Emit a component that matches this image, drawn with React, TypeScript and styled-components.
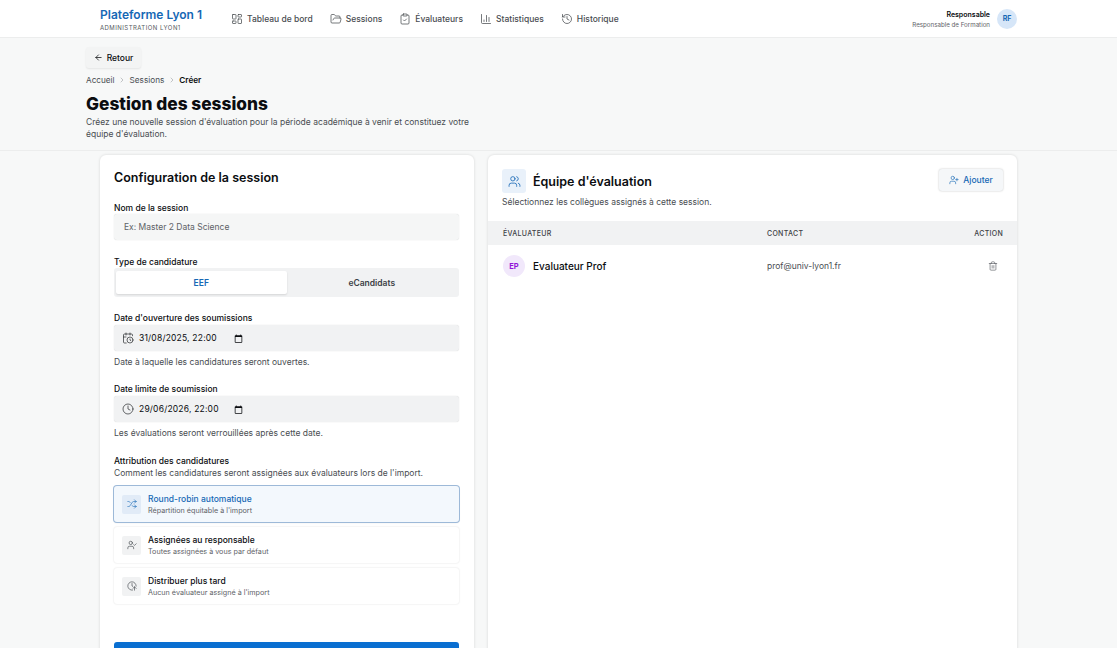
import React from 'react';
import styled, { createGlobalStyle } from 'styled-components';
import {
  ArrowLeft,
  CalendarClock,
  ChartColumn,
  ChevronRight,
  ClipboardCheck,
  Clock,
  ClockArrowUp,
  FolderOpen,
  History,
  LayoutDashboard,
  Shuffle,
  Trash2,
  UserCheck,
  UserPlus,
  Users,
} from 'lucide-react';

const FONT = `'Inter', 'Noto Sans', sans-serif`;

const GlobalStyle = createGlobalStyle`
  html, body {
    margin: 0;
    padding: 0;
    background: #f7f8f8;
    font-family: ${FONT};
    color: #0b0d10;
  }
  * { box-sizing: border-box; }
`;

const Page = styled.div`
  height: 100vh;
  overflow: hidden;
`;

// Top bar
const TopBar = styled.header`
  height: 38px;
  background: #fff;
  border-bottom: 1px solid #eceded;
  padding: 0 100px;
  display: flex;
  align-items: center;
  justify-content: space-between;
`;

const TopLeft = styled.div`
  display: flex;
  align-items: center;
  gap: 26px;
`;

const Brand = styled.div`
  display: flex;
  flex-direction: column;
  gap: 2px;
  width: 105px;
`;

const BrandName = styled.span`
  font-size: 12px;
  font-weight: 600;
  color: #1668b5;
  white-space: nowrap;
`;

const BrandSub = styled.span`
  font-size: 6px;
  letter-spacing: 0.45px;
  color: #55595e;
  text-transform: uppercase;
  white-space: nowrap;
`;

const Nav = styled.nav`
  display: flex;
  align-items: center;
  gap: 17px;
  padding-top: 1px;
`;

const NavItem = styled.a`
  display: flex;
  align-items: center;
  gap: 4px;
  font-size: 8.5px;
  font-weight: 500;
  color: #494d52;
  white-space: nowrap;
`;

const UserArea = styled.div`
  display: flex;
  align-items: center;
  gap: 7px;
`;

const UserText = styled.div`
  display: flex;
  flex-direction: column;
  align-items: flex-end;
  gap: 2px;
`;

const UserRole = styled.span`
  font-size: 7px;
  font-weight: 600;
`;

const UserSub = styled.span`
  font-size: 6.2px;
  color: #5e6267;
`;

const UserBadge = styled.div`
  width: 20px;
  height: 20px;
  border-radius: 50%;
  background: #d6e6f8;
  color: #1668b5;
  font-size: 7px;
  font-weight: 700;
  display: flex;
  align-items: center;
  justify-content: center;
`;

// Page heading
const PageHead = styled.section`
  height: 113px;
  padding: 9px 86px 0;
  border-bottom: 1px solid #eceded;
`;

const BackButton = styled.button`
  height: 21px;
  width: 55px;
  border: 0;
  border-radius: 3px;
  background: #f3f4f4;
  box-shadow: 0 1px 2px rgba(0, 0, 0, 0.08);
  font-family: ${FONT};
  font-size: 8.5px;
  font-weight: 500;
  color: #0b0d10;
  display: flex;
  align-items: center;
  justify-content: center;
  gap: 4px;
  padding: 0;
`;

const Crumbs = styled.div`
  margin-top: 6px;
  height: 11px;
  display: flex;
  align-items: center;
  gap: 3.5px;
  font-size: 8.2px;
  color: #494d52;
  svg { color: #8a8e93; }
`;

const CrumbCurrent = styled.span`
  font-weight: 600;
  color: #0b0d10;
`;

const Title = styled.h1`
  margin: 7px 0 0;
  font-size: 17.3px;
  line-height: 24px;
  font-weight: 800;
  color: #0b0d10;
`;

const Lead = styled.p`
  margin: 0;
  width: 390px;
  font-size: 8.5px;
  line-height: 12px;
  color: #494d52;
`;

// Main columns
const Columns = styled.main`
  display: grid;
  grid-template-columns: 374px 529px;
  gap: 14px;
  padding: 4px 100px 0;
`;

const Card = styled.section`
  background: #fff;
  border-radius: 6px;
  box-shadow: 0 0 3px rgba(0, 0, 0, 0.14);
  height: 640px;
`;

const FormCard = styled(Card)`
  padding: 15px 15px 15px 14px;
`;

const CardTitle = styled.h2`
  margin: 0;
  font-size: 12.5px;
  line-height: 16px;
  font-weight: 600;
`;

const Field = styled.div<{ $top: number }>`
  margin-top: ${p => p.$top}px;
`;

const Label = styled.div`
  font-size: 8.5px;
  line-height: 11px;
  font-weight: 500;
  color: #0b0d10;
`;

const TextInput = styled.input`
  display: block;
  width: 100%;
  height: 26px;
  padding: 0 10px;
  border: 0;
  border-radius: 3px;
  background: #f5f6f6;
  box-shadow: 0 0 1px rgba(0, 0, 0, 0.2);
  font-family: ${FONT};
  font-size: 8.5px;
  &::placeholder { color: #5e6267; opacity: 1; }
`;

const Segments = styled.div`
  height: 29px;
  padding: 3px 2px;
  border-radius: 3px;
  background: #f1f2f3;
  display: grid;
  grid-template-columns: 1fr 1fr;
`;

const Segment = styled.button<{ $active?: boolean }>`
  border: 0;
  padding: 0;
  border-radius: 2px;
  font-family: ${FONT};
  font-size: 8.5px;
  font-weight: 600;
  background: ${p => (p.$active ? '#fff' : 'transparent')};
  color: ${p => (p.$active ? '#1668b5' : '#3d4146')};
  box-shadow: ${p => (p.$active ? '0 1px 2px rgba(0,0,0,0.12)' : 'none')};
`;

const DateBox = styled.div`
  margin-top: 1px;
  height: 26px;
  padding: 0 8px;
  border-radius: 3px;
  background: #f1f2f3;
  box-shadow: 0 0 1px rgba(0, 0, 0, 0.2);
  display: flex;
  align-items: center;
  color: #26292d;
`;

const DateText = styled.span`
  margin-left: 5px;
  width: 95px;
  font-size: 8.5px;
  letter-spacing: 0.2px;
  color: #0b0d10;
`;

const Help = styled.p<{ $top?: number }>`
  margin: ${p => p.$top ?? 6}px 0 0;
  font-size: 8.5px;
  line-height: 11px;
  color: #494d52;
`;

const Options = styled.div`
  margin-top: 7px;
  display: flex;
  flex-direction: column;
  gap: 5px;
`;

const Option = styled.div<{ $active?: boolean }>`
  height: 36px;
  padding: 0 8px;
  border-radius: 3px;
  display: flex;
  align-items: center;
  gap: 7px;
  background: ${p => (p.$active ? '#f3f8fd' : '#fff')};
  box-shadow: ${p =>
    p.$active ? '0 0 0 1px #9db9d8, 0 1px 2px rgba(0,0,0,0.1)' : '0 0 2px rgba(0,0,0,0.14)'};
`;

const OptionIcon = styled.div<{ $active?: boolean }>`
  width: 19px;
  height: 19px;
  border-radius: 2px;
  background: ${p => (p.$active ? '#e1ebf7' : '#f1f2f3')};
  color: ${p => (p.$active ? '#1668b5' : '#3d4146')};
  display: flex;
  align-items: center;
  justify-content: center;
`;

const OptionText = styled.div`
  display: flex;
  flex-direction: column;
  gap: 1px;
`;

const OptionName = styled.span<{ $active?: boolean }>`
  font-size: 8.5px;
  line-height: 11px;
  font-weight: 500;
  color: ${p => (p.$active ? '#1668b5' : '#0b0d10')};
`;

const OptionHint = styled.span`
  font-size: 7.2px;
  line-height: 9px;
  color: #5e6267;
`;

const SubmitButton = styled.button`
  display: block;
  width: 100%;
  height: 32px;
  margin-top: 38px;
  border: 0;
  border-radius: 3px;
  background: #0a6fd1;
  color: #fff;
  font-family: ${FONT};
  font-size: 10px;
  font-weight: 600;
`;

// Team panel
const TeamHead = styled.div`
  padding: 14px 14px 14px 14px;
  height: 66px;
  display: flex;
  justify-content: space-between;
  align-items: flex-start;
`;

const TeamTitleRow = styled.div`
  display: flex;
  align-items: center;
  gap: 7px;
`;

const TeamIcon = styled.div`
  width: 24px;
  height: 24px;
  border-radius: 3px;
  background: #e9f1fa;
  color: #1668b5;
  display: flex;
  align-items: center;
  justify-content: center;
`;

const TeamTitle = styled.h2`
  margin: 0;
  font-size: 12.5px;
  font-weight: 600;
`;

const TeamLead = styled.p`
  margin: 4px 0 0;
  font-size: 8.5px;
  line-height: 11px;
  color: #494d52;
`;

const AddButton = styled.button`
  width: 64px;
  height: 22px;
  border: 0;
  border-radius: 3px;
  background: #f5f7f9;
  box-shadow: 0 0 2px rgba(0, 0, 0, 0.25);
  color: #1668b5;
  font-family: ${FONT};
  font-size: 8.5px;
  font-weight: 500;
  display: flex;
  align-items: center;
  justify-content: center;
  gap: 4px;
  padding: 0;
`;

const TableRow = styled.div`
  display: grid;
  grid-template-columns: 264px 1fr 60px;
  align-items: center;
  padding: 0 14px 0 15px;
`;

const TableHead = styled(TableRow)`
  height: 24px;
  background: #f1f2f3;
  font-size: 7px;
  font-weight: 500;
  letter-spacing: 0.3px;
  color: #3d4146;
  text-transform: uppercase;
`;

const ActionHead = styled.span`
  text-align: right;
`;

const PersonRow = styled(TableRow)`
  height: 42px;
`;

const Person = styled.div`
  display: flex;
  align-items: center;
  gap: 8px;
`;

const PersonBadge = styled.div`
  width: 22px;
  height: 22px;
  border-radius: 50%;
  background: #f1e8fb;
  color: #9214d8;
  font-size: 7.5px;
  font-weight: 700;
  display: flex;
  align-items: center;
  justify-content: center;
`;

const PersonName = styled.span`
  font-size: 10px;
  font-weight: 500;
`;

const PersonMail = styled.span`
  font-size: 8.5px;
  color: #494d52;
`;

const DeleteCell = styled.div`
  display: flex;
  justify-content: flex-end;
  padding-right: 5px;
  color: #55595e;
`;

const PickerIcon = () => (
  <svg width="9" height="9" viewBox="0 0 24 24" fill="#0b0d10">
    <path d="M20 3h-1V1h-2v2H7V1H5v2H4c-1.1 0-2 .9-2 2v16c0 1.1.9 2 2 2h16c1.1 0 2-.9 2-2V5c0-1.1-.9-2-2-2zm0 18H4V8h16v13z" />
  </svg>
);

const NAV_ITEMS = [
  { label: 'Tableau de bord', Icon: LayoutDashboard },
  { label: 'Sessions', Icon: FolderOpen },
  { label: 'Évaluateurs', Icon: ClipboardCheck },
  { label: 'Statistiques', Icon: ChartColumn },
  { label: 'Historique', Icon: History },
];

const ASSIGN_OPTIONS = [
  { name: 'Round-robin automatique', hint: "Répartition équitable à l'import", Icon: Shuffle, active: true },
  { name: 'Assignées au responsable', hint: 'Toutes assignées à vous par défaut', Icon: UserCheck },
  { name: 'Distribuer plus tard', hint: "Aucun évaluateur assigné à l'import", Icon: ClockArrowUp },
];

const App: React.FC = () => (
  <Page>
    <GlobalStyle />
    <TopBar>
      <TopLeft>
        <Brand>
          <BrandName>Plateforme Lyon 1</BrandName>
          <BrandSub>Administration Lyon1</BrandSub>
        </Brand>
        <Nav>
          {NAV_ITEMS.map(({ label, Icon }) => (
            <NavItem key={label}>
              <Icon size={12} strokeWidth={1.5} />
              {label}
            </NavItem>
          ))}
        </Nav>
      </TopLeft>
      <UserArea>
        <UserText>
          <UserRole>Responsable</UserRole>
          <UserSub>Responsable de Formation</UserSub>
        </UserText>
        <UserBadge>RF</UserBadge>
      </UserArea>
    </TopBar>

    <PageHead>
      <BackButton>
        <ArrowLeft size={9} strokeWidth={2} />
        Retour
      </BackButton>
      <Crumbs>
        <span>Accueil</span>
        <ChevronRight size={8} strokeWidth={1.5} />
        <span>Sessions</span>
        <ChevronRight size={8} strokeWidth={1.5} />
        <CrumbCurrent>Créer</CrumbCurrent>
      </Crumbs>
      <Title>Gestion des sessions</Title>
      <Lead>
        Créez une nouvelle session d'évaluation pour la période académique à venir et constituez votre
        équipe d'évaluation.
      </Lead>
    </PageHead>

    <Columns>
      <FormCard>
        <CardTitle>Configuration de la session</CardTitle>
        <Field $top={17}>
          <Label>Nom de la session</Label>
          <TextInput placeholder="Ex: Master 2 Data Science" />
        </Field>
        <Field $top={17}>
          <Label>Type de candidature</Label>
          <Segments>
            <Segment $active>EEF</Segment>
            <Segment>eCandidats</Segment>
          </Segments>
        </Field>
        <Field $top={16}>
          <Label>Date d'ouverture des soumissions</Label>
          <DateBox>
            <CalendarClock size={12} strokeWidth={1.4} />
            <DateText>31/08/2025, 22:00</DateText>
            <PickerIcon />
          </DateBox>
          <Help>Date à laquelle les candidatures seront ouvertes.</Help>
        </Field>
        <Field $top={16}>
          <Label>Date limite de soumission</Label>
          <DateBox>
            <Clock size={12} strokeWidth={1.4} />
            <DateText>29/06/2026, 22:00</DateText>
            <PickerIcon />
          </DateBox>
          <Help>Les évaluations seront verrouillées après cette date.</Help>
        </Field>
        <Field $top={17}>
          <Label>Attribution des candidatures</Label>
          <Help $top={1}>Comment les candidatures seront assignées aux évaluateurs lors de l'import.</Help>
          <Options>
            {ASSIGN_OPTIONS.map(({ name, hint, Icon, active }) => (
              <Option key={name} $active={active}>
                <OptionIcon $active={active}>
                  <Icon size={10} strokeWidth={1.5} />
                </OptionIcon>
                <OptionText>
                  <OptionName $active={active}>{name}</OptionName>
                  <OptionHint>{hint}</OptionHint>
                </OptionText>
              </Option>
            ))}
          </Options>
        </Field>
        <SubmitButton aria-label="Créer la session" />
      </FormCard>

      <Card>
        <TeamHead>
          <div>
            <TeamTitleRow>
              <TeamIcon>
                <Users size={13} strokeWidth={1.5} />
              </TeamIcon>
              <TeamTitle>Équipe d'évaluation</TeamTitle>
            </TeamTitleRow>
            <TeamLead>Sélectionnez les collègues assignés à cette session.</TeamLead>
          </div>
          <AddButton>
            <UserPlus size={10} strokeWidth={1.5} />
            Ajouter
          </AddButton>
        </TeamHead>
        <TableHead>
          <span>Évaluateur</span>
          <span>Contact</span>
          <ActionHead>Action</ActionHead>
        </TableHead>
        <PersonRow>
          <Person>
            <PersonBadge>EP</PersonBadge>
            <PersonName>Evaluateur Prof</PersonName>
          </Person>
          <PersonMail>prof@univ-lyon1.fr</PersonMail>
          <DeleteCell>
            <Trash2 size={10} strokeWidth={1.5} />
          </DeleteCell>
        </PersonRow>
      </Card>
    </Columns>
  </Page>
);

export default App;
